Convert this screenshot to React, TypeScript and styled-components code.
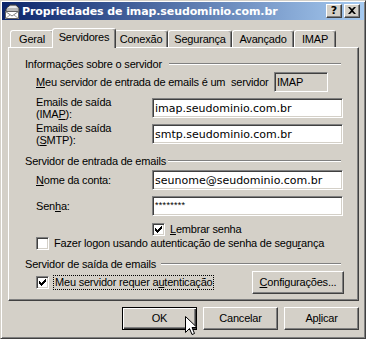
import React from 'react';
import styled, { createGlobalStyle, css } from 'styled-components';

const GlobalStyle = createGlobalStyle`
  html, body { margin: 0; padding: 0; background: #D4D0C8; }
  * { box-sizing: border-box; }
`;

const Window = styled.div`
  position: relative;
  width: 366px;
  height: 339px;
  background: #D4D0C8;
  border: 1px solid;
  border-color: #D4D0C8 #404040 #404040 #D4D0C8;
  box-shadow: inset 1px 1px #fff, inset -1px -1px #808080;
  padding: 1px;
  display: flex;
  flex-direction: column;
  font-family: "Liberation Sans", Arial, sans-serif;
  font-size: 11px;
  letter-spacing: -0.2px;
  color: #000;
`;

const TitleBar = styled.div`
  height: 18px;
  flex: none;
  display: flex;
  align-items: center;
  padding: 0 4px 0 2px;
  background: linear-gradient(to right, #0A246A, #A6CAF0);
`;

const TitleText = styled.span`
  margin-left: 2px;
  font-family: "DejaVu Sans", Verdana, sans-serif;
  font-weight: bold;
  font-size: 11px;
  letter-spacing: -0.1px;
  color: #fff;
  white-space: nowrap;
`;

const CaptionButtons = styled.div`
  margin-left: auto;
  display: flex;
  gap: 2px;
`;

const CaptionButton = styled.div`
  width: 16px;
  height: 14px;
  background: #D4D0C8;
  border: 1px solid;
  border-color: #fff #404040 #404040 #fff;
  box-shadow: inset -1px -1px #808080;
  display: flex;
  align-items: center;
  justify-content: center;
  font-family: "DejaVu Sans", Verdana, sans-serif;
  font-weight: bold;
  font-size: 11px;
  letter-spacing: 0;
  line-height: 1;
  color: #000;
  padding-bottom: 1px;
`;

const Body = styled.div`
  flex: 1;
  display: flex;
  flex-direction: column;
  padding: 8px 5px 0 6px;
`;

const TabStrip = styled.div`
  display: flex;
  align-items: flex-end;
  height: 19px;
  flex: none;
  padding-left: 2px;
`;

const Tab = styled.div<{ $w: number; $active?: boolean }>`
  flex: none;
  width: ${p => p.$w + (p.$active ? 4 : 0)}px;
  height: ${p => (p.$active ? 20 : 17)}px;
  margin: ${p => (p.$active ? '0 -2px -1px -2px' : '0')};
  padding-bottom: ${p => (p.$active ? 3 : 0)}px;
  position: relative;
  z-index: ${p => (p.$active ? 2 : 0)};
  background: #D4D0C8;
  border: 1px solid;
  border-bottom: none;
  border-color: #fff #404040 transparent #fff;
  border-radius: 3px 3px 0 0;
  box-shadow: inset -1px 0 #808080;
  display: flex;
  align-items: center;
  justify-content: center;
  white-space: nowrap;
`;

const Panel = styled.div`
  height: 254px;
  flex: none;
  border: 1px solid;
  border-color: #fff #404040 #404040 #fff;
  box-shadow: inset -1px -1px #808080;
  padding: 9px 0 0 16px;
  display: flex;
  flex-direction: column;
`;

const GroupHeader = styled.div<{ $mt: number; $gap: number }>`
  display: flex;
  align-items: center;
  height: 13px;
  flex: none;
  margin-top: ${p => p.$mt}px;
  margin-right: 17px;
  white-space: nowrap;
  &::after {
    content: "";
    flex: 1;
    height: 0;
    margin-left: ${p => p.$gap}px;
    border-top: 1px solid #808080;
    border-bottom: 1px solid #fff;
  }
`;

const FieldRow = styled.div<{ $mt: number; $h: number; $top?: boolean; $indent?: number }>`
  display: flex;
  align-items: ${p => (p.$top ? 'flex-start' : 'center')};
  height: ${p => p.$h}px;
  flex: none;
  margin-top: ${p => p.$mt}px;
  padding-left: ${p => p.$indent ?? 11}px;
  white-space: pre;
`;

const FieldLabel = styled.div<{ $w: number }>`
  width: ${p => p.$w}px;
  flex: none;
  line-height: 12px;
`;

const sunken = css`
  border: 1px solid;
  border-color: #808080 #fff #fff #808080;
  box-shadow: inset 1px 1px #404040, inset -1px -1px #D4D0C8;
`;

const TextBox = styled.div<{ $mt?: number }>`
  width: 191px;
  height: 20px;
  flex: none;
  margin-top: ${p => p.$mt ?? 0}px;
  background: #fff;
  ${sunken};
  padding: 0 3px 0 2px;
  display: flex;
  align-items: center;
  font-family: "DejaVu Sans", Verdana, sans-serif;
  font-size: 11px;
  letter-spacing: 0;
`;

const Password = styled.span`
  font-family: "Liberation Sans", Arial, sans-serif;
  font-size: 9px;
  letter-spacing: 0.3px;
  margin-top: -3px;
`;

const ReadOnlyBox = styled.div`
  width: 54px;
  height: 20px;
  flex: none;
  background: #D4D0C8;
  ${sunken};
  padding-left: 2px;
  display: flex;
  align-items: center;
`;

const CheckBox = styled.span`
  width: 13px;
  height: 13px;
  flex: none;
  background: #fff;
  ${sunken};
  display: flex;
  align-items: center;
  justify-content: center;
`;

const CheckLabel = styled.span<{ $focus?: boolean }>`
  margin-left: ${p => (p.$focus ? 4 : 5)}px;
  line-height: 13px;
  ${p =>
    p.$focus &&
    css`
      border: 1px dotted #000;
      padding: 0 1px;
    `}
`;

const Key = styled.span`
  text-decoration: underline;
`;

const PushButton = styled.div<{ $default?: boolean; $w?: number; $ml?: string; $mr?: number }>`
  width: ${p => p.$w ?? 75}px;
  height: 23px;
  flex: none;
  margin-left: ${p => p.$ml ?? '0'};
  margin-right: ${p => p.$mr ?? 0}px;
  display: flex;
  align-items: center;
  justify-content: center;
  padding-bottom: 1px;
  background: #D4D0C8;
  ${p =>
    p.$default
      ? css`
          border: 1px solid #000;
          box-shadow: inset 1px 1px #fff, inset -1px -1px #404040, inset -2px -2px #808080;
        `
      : css`
          border: 1px solid;
          border-color: #fff #404040 #404040 #fff;
          box-shadow: inset -1px -1px #808080;
        `}
`;

const ButtonRow = styled.div`
  display: flex;
  justify-content: flex-end;
  gap: 6px;
  margin-top: 6px;
`;

const Cursor = styled.svg`
  position: absolute;
  left: 184px;
  top: 315px;
`;

const CheckMark = () => (
  <svg width="7" height="7" viewBox="0 0 7 7">
    <path
      d="M0 2H1V3H2V4H3V3H4V2H5V1H6V0H7V3H6V4H5V5H4V6H3V7H2V6H1V5H0Z"
      fill="#000"
    />
  </svg>
);

const MailIcon = () => (
  <svg width="16" height="16" viewBox="0 0 16 16">
    <path d="M2 6 L6 2 H12 L15 5 V9 H2 Z" fill="#B8B8B8" stroke="#404040" strokeWidth="1" />
    <path d="M3 5 L6.5 3 H11.5 L13.5 5 Z" fill="#E8E8E8" />
    <rect x="1.5" y="8.5" width="13" height="7" fill="#fff" stroke="#606060" />
    <path d="M1.5 8.5 L8 13 L14.5 8.5" fill="none" stroke="#808080" />
    <path d="M1.5 15.5 L6 12 M14.5 15.5 L10 12" fill="none" stroke="#A0A0A0" />
  </svg>
);

const CloseGlyph = () => (
  <svg width="8" height="7" viewBox="0 0 8 7">
    <path d="M0 0H2L4 2L6 0H8L5 3.5L8 7H6L4 5L2 7H0L3 3.5Z" fill="#000" />
  </svg>
);

const tabs = [
  { label: 'Geral', w: 44 },
  { label: 'Servidores', w: 60, active: true },
  { label: 'Conexão', w: 54 },
  { label: 'Segurança', w: 64 },
  { label: 'Avançado', w: 62 },
  { label: 'IMAP', w: 42 },
];

export default function App() {
  return (
    <>
      <GlobalStyle />
      <Window>
        <TitleBar>
          <MailIcon />
          <TitleText>Propriedades de imap.seudominio.com.br</TitleText>
          <CaptionButtons>
            <CaptionButton>?</CaptionButton>
            <CaptionButton>
              <CloseGlyph />
            </CaptionButton>
          </CaptionButtons>
        </TitleBar>
        <Body>
          <TabStrip>
            {tabs.map(t => (
              <Tab key={t.label} $w={t.w} $active={t.active}>
                {t.label}
              </Tab>
            ))}
          </TabStrip>
          <Panel>
            <GroupHeader $mt={0} $gap={7}>Informações sobre o servidor</GroupHeader>
            <FieldRow $mt={2} $h={20}>
              <FieldLabel $w={238}>
                <Key>M</Key>eu servidor de entrada de emails é um  servidor
              </FieldLabel>
              <ReadOnlyBox>IMAP</ReadOnlyBox>
            </FieldRow>
            <FieldRow $mt={4} $h={24} $top>
              <FieldLabel $w={116}>
                Emails de saída
                <br />
                (IMA<Key>P</Key>):
              </FieldLabel>
              <TextBox $mt={2}>imap.seudominio.com.br</TextBox>
            </FieldRow>
            <FieldRow $mt={2} $h={24} $top>
              <FieldLabel $w={116}>
                Emails de saída
                <br />
                (<Key>S</Key>MTP):
              </FieldLabel>
              <TextBox $mt={2}>smtp.seudominio.com.br</TextBox>
            </FieldRow>
            <GroupHeader $mt={8} $gap={2}>Servidor de entrada de emails</GroupHeader>
            <FieldRow $mt={3} $h={20}>
              <FieldLabel $w={116}>
                <Key>N</Key>ome da conta:
              </FieldLabel>
              <TextBox>seunome@seudominio.com.br</TextBox>
            </FieldRow>
            <FieldRow $mt={6} $h={20}>
              <FieldLabel $w={116}>
                Sen<Key>h</Key>a:
              </FieldLabel>
              <TextBox>
                <Password>********</Password>
              </TextBox>
            </FieldRow>
            <FieldRow $mt={7} $h={13} $indent={127}>
              <CheckBox>
                <CheckMark />
              </CheckBox>
              <CheckLabel>
                <Key>L</Key>embrar senha
              </CheckLabel>
            </FieldRow>
            <FieldRow $mt={1} $h={13}>
              <CheckBox />
              <CheckLabel>
                Fazer logon usando autenticação de senha de segu<Key>r</Key>ança
              </CheckLabel>
            </FieldRow>
            <GroupHeader $mt={7} $gap={5}>Servidor de saída de emails</GroupHeader>
            <FieldRow $mt={1} $h={23}>
              <CheckBox>
                <CheckMark />
              </CheckBox>
              <CheckLabel $focus>
                Meu servidor requer a<Key>u</Key>tenticação
              </CheckLabel>
              <PushButton $w={92} $ml="auto" $mr={14}>
                <Key>C</Key>onfigurações...
              </PushButton>
            </FieldRow>
          </Panel>
          <ButtonRow>
            <PushButton $default>OK</PushButton>
            <PushButton>Cancelar</PushButton>
            <PushButton>
              Ap<Key>l</Key>icar
            </PushButton>
          </ButtonRow>
        </Body>
        <Cursor width="13" height="20" viewBox="0 0 13 20">
          <path
            d="M0.5 0.5 V16.5 L4.5 12.5 L7 18.5 L9.5 17.5 L7 11.5 H12 Z"
            fill="#fff"
            stroke="#000"
            strokeWidth="1"
            strokeLinejoin="miter"
          />
        </Cursor>
      </Window>
    </>
  );
}
